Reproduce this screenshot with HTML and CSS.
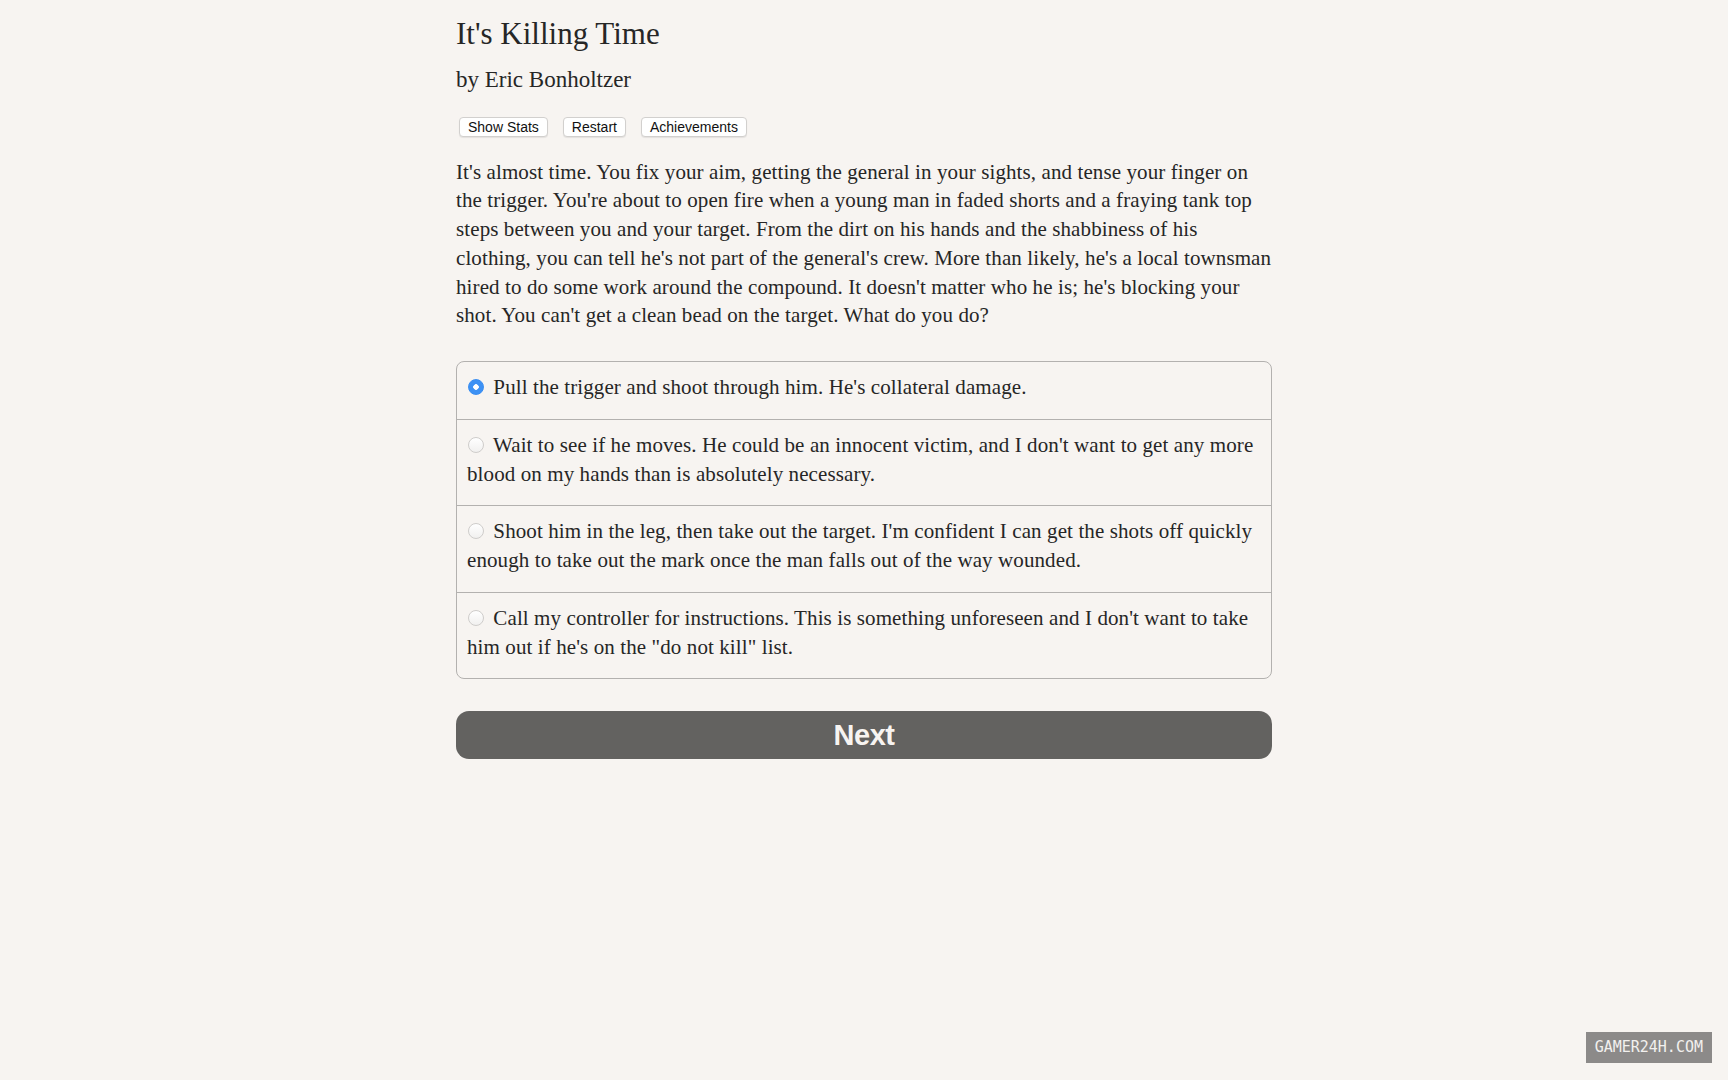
FILE: index.html
```html
<!DOCTYPE html>
<html lang="en">
<head>
    <meta charset="UTF-8">
    <meta name="viewport" content="width=device-width, initial-scale=1.0">
    <title>It's Killing Time</title>
    <link rel="stylesheet" href="styles.css">
</head>
<body>
    <div class="container">
        <header>
            <h1 class="title">It's Killing Time</h1>
            <h2 class="author">by Eric Bonholtzer</h2>
            <div class="buttons">
                <button class="spacedLink">Show Stats</button>
                <button class="spacedLink">Restart</button>
                <button class="spacedLink">Achievements</button>
            </div>
        </header>

        <main id="text">
            <p>It's almost time. You fix your aim, getting the general in your sights, and tense your finger on the trigger. You're about to open fire when a young man in faded shorts and a fraying tank top steps between you and your target. From the dirt on his hands and the shabbiness of his clothing, you can tell he's not part of the general's crew. More than likely, he's a local townsman hired to do some work around the compound. It doesn't matter who he is; he's blocking your shot. You can't get a clean bead on the target. What do you do?</p>

            <form class="choice">
                <label class="option">
                    <input type="radio" name="choice" value="0" checked>
                    Pull the trigger and shoot through him. He's collateral damage.
                </label>
                <label class="option">
                    <input type="radio" name="choice" value="1">
                    Wait to see if he moves. He could be an innocent victim, and I don't want to get any more blood on my hands than is absolutely necessary.
                </label>
                <label class="option">
                    <input type="radio" name="choice" value="2">
                    Shoot him in the leg, then take out the target. I'm confident I can get the shots off quickly enough to take out the mark once the man falls out of the way wounded.
                </label>
                <label class="option">
                    <input type="radio" name="choice" value="3">
                    Call my controller for instructions. This is something unforeseen and I don't want to take him out if he's on the "do not kill" list.
                </label>
            </form>

            <button class="next">Next</button>
        </main>
    </div>

    <div class="watermark">GAMER24H.COM</div>
</body>
</html>
```

FILE: styles.css
```css
body {
    background-color: #f7f4f1;
    color: #262626;
    font-family: "Liberation Serif", "Times New Roman", serif;
    margin: 0;
    padding: 0;
}

.container {
    width: 816px;
    margin: 0 auto;
}

.title {
    font-size: 31px;
    font-weight: normal;
    line-height: 1.2;
    margin: 15px 0 0 0;
}

.author {
    font-size: 23px;
    font-weight: normal;
    line-height: 1.2;
    margin: 14px 0 0 0;
}

.buttons {
    display: flex;
    gap: 15px;
    margin: 23px 0 0 3px;
}

.spacedLink {
    font-family: "Liberation Sans", Arial, sans-serif;
    font-size: 14px;
    line-height: 16px;
    color: #111;
    background-color: white;
    border: 1px solid #d2d0ce;
    border-radius: 4px;
    padding: 1px 8px;
    box-shadow: 0 1px 1px rgba(0, 0, 0, 0.08);
}

#text p {
    font-size: 21px;
    line-height: 28.7px;
    letter-spacing: 0.1px;
    margin: 21px 0 0 0;
}

.choice {
    margin-top: 31px;
    border: 1px solid #b3b1af;
    border-radius: 8px;
    font-size: 21px;
    line-height: 29px;
    letter-spacing: 0.1px;
}

.option {
    display: block;
    padding: 11px 8px 16.5px 10px;
    border-top: 1px solid #b3b1af;
}

.option:first-child {
    border-top: none;
}

.option input {
    appearance: none;
    -webkit-appearance: none;
    width: 16px;
    height: 16px;
    margin: 0 4px 0 1px;
    border: 1px solid #cfcdcb;
    border-radius: 50%;
    background: linear-gradient(#ffffff, #f1f0ef);
    vertical-align: -1px;
}

.option input:checked {
    border-color: #3a8ef2;
    background: radial-gradient(circle, #ffffff 0, #ffffff 2.5px, #3d91f4 3px);
}

.next {
    display: block;
    width: 100%;
    height: 48px;
    margin-top: 32px;
    background-color: #636260;
    color: #f7f4f1;
    border: none;
    border-radius: 13px;
    font-family: "Liberation Sans", Arial, sans-serif;
    font-weight: bold;
    font-size: 29px;
    letter-spacing: -0.5px;
}

.watermark {
    position: fixed;
    right: 16px;
    bottom: 17px;
    background-color: #8c8a89;
    color: #f2f0ee;
    font-family: "DejaVu Sans Mono", monospace;
    font-size: 15px;
    line-height: 31px;
    padding: 0 9px;
}
```
